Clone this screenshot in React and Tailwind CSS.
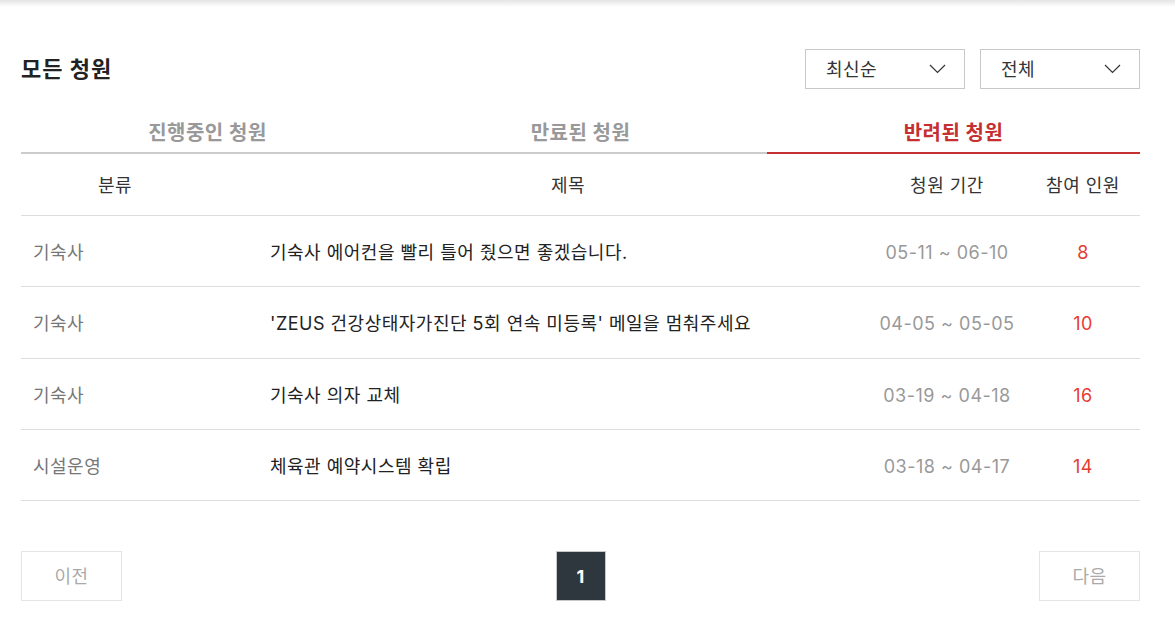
import { useState } from 'react';

const rows = [
  { cat: '기숙사', title: '기숙사 에어컨을 빨리 틀어 줬으면 좋겠습니다.', period: '05-11 ~ 06-10', count: 8, h: 'h-[71px]' },
  { cat: '기숙사', title: "'ZEUS 건강상태자가진단 5회 연속 미등록' 메일을 멈춰주세요", period: '04-05 ~ 05-05', count: 10, h: 'h-[72px]' },
  { cat: '기숙사', title: '기숙사 의자 교체', period: '03-19 ~ 04-18', count: 16, h: 'h-[71px]' },
  { cat: '시설운영', title: '체육관 예약시스템 확립', period: '03-18 ~ 04-17', count: 14, h: 'h-[71px]' },
];

const tabs = ['진행중인 청원', '만료된 청원', '반려된 청원'];

const Chevron = () => (
  <svg width="17" height="10" viewBox="0 0 17 10" fill="none" stroke="#333" strokeWidth="1.2">
    <polyline points="1,1 8.5,8.5 16,1" />
  </svg>
);

const Select = ({ label }) => (
  <button className="flex h-[40px] w-[160px] items-center justify-between border border-[#c8c8c8] bg-white pl-[20px] pr-[18px] text-[18px] tracking-[0.5px] text-[#333]">
    <span>{label}</span>
    <Chevron />
  </button>
);

export default function App() {
  const [active, setActive] = useState(2);

  return (
    <div className="min-h-screen bg-white" style={{ fontFamily: 'Inter, "Noto Sans CJK KR", sans-serif' }}>
      {/* shadow of the header above */}
      <div className="h-[7px] bg-gradient-to-b from-[#e4e4e4] to-white" />

      <div className="ml-[21px] w-[1119px]">
        <div className="mt-[42px] flex h-[40px] items-center justify-between">
          <h1 className="text-[22px] font-bold tracking-[1px] text-[#222]">모든 청원</h1>
          <div className="flex gap-[15px]">
            <Select label="최신순" />
            <Select label="전체" />
          </div>
        </div>

        {/* tabs */}
        <div className="mt-[22px] grid grid-cols-3">
          {tabs.map((t, i) => (
            <button
              key={t}
              onClick={() => setActive(i)}
              className={`flex h-[43px] items-center justify-center border-b-2 pt-[2px] text-[20px] font-bold tracking-[0.5px] ${
                active === i ? 'border-[#c62f2f] text-[#c62f2f]' : 'border-[#cccccc] text-[#999]'
              }`}
            >
              {t}
            </button>
          ))}
        </div>

        {/* table */}
        <div className="grid h-[62px] grid-cols-[237px_610px_158px_114px] items-center border-b border-[#dddddd] pt-[2px] text-[18px] tracking-[0.5px] text-[#333]">
          <div className="pl-[77px]">분류</div>
          <div className="pl-[10px] text-center">제목</div>
          <div className="text-center">청원 기간</div>
          <div className="text-center">참여 인원</div>
        </div>
        {rows.map((r, i) => (
          <div
            key={i}
            className={`grid ${r.h} grid-cols-[237px_610px_158px_114px] items-center border-b border-[#dddddd] pt-[2px] text-[18px] tracking-[0.5px]`}
          >
            <div className="pl-[12px] text-[#777]">{r.cat}</div>
            <div className="pl-[12px] text-[#222]">{r.title}</div>
            <div className="text-center text-[#999]">{r.period}</div>
            <div className="text-center text-[#e53b2f]">{r.count}</div>
          </div>
        ))}

        {/* pagination */}
        <div className="mt-[50px] flex items-center justify-between">
          <button className="flex h-[50px] w-[101px] items-center justify-center border border-[#e5e5e5] text-[18px] tracking-[0.5px] text-[#aaa]">
            이전
          </button>
          <button className="flex h-[50px] w-[50px] items-center justify-center border border-[#c8c8c8] bg-[#2e363e] text-[18px] font-bold text-white">
            1
          </button>
          <button className="flex h-[50px] w-[101px] items-center justify-center border border-[#e5e5e5] text-[18px] tracking-[0.5px] text-[#aaa]">
            다음
          </button>
        </div>
      </div>
    </div>
  );
}
